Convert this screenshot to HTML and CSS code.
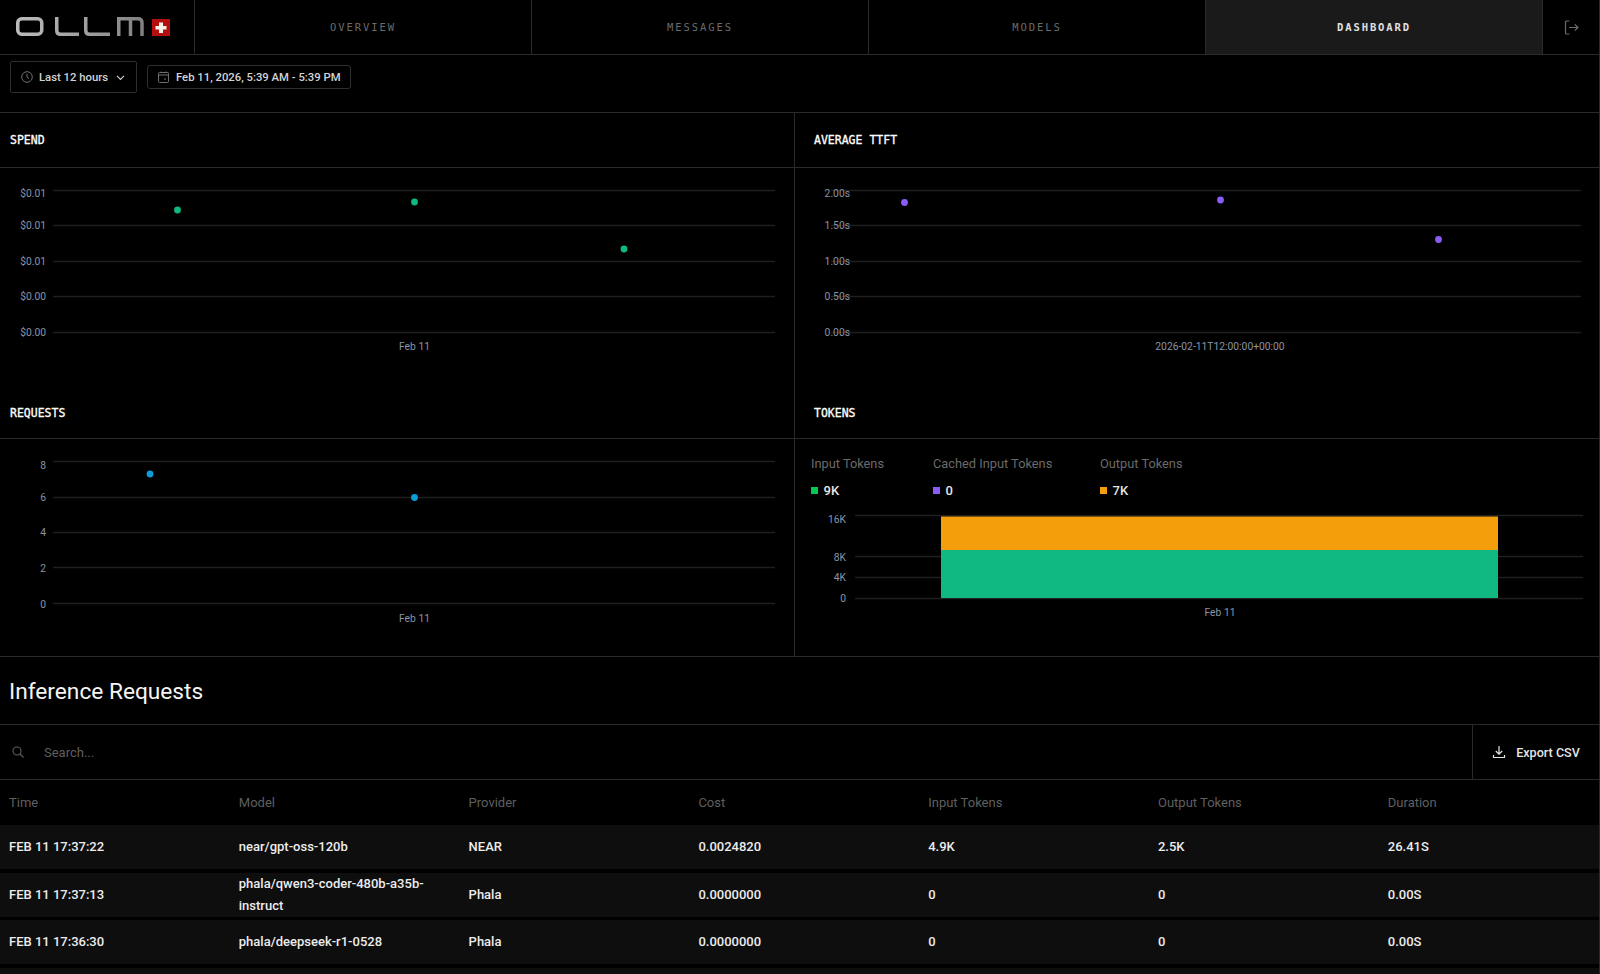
FILE: index.html
```html
<!DOCTYPE html>
<html lang="en">
<head>
<meta charset="utf-8">
<title>OLLM Dashboard</title>
<link rel="stylesheet" href="styles.css">
</head>
<body>
<header class="nav">
  <div class="logo">
    <svg width="160" height="24" viewBox="0 0 160 24" class="logo-mark">
      <defs><linearGradient id="lg" gradientUnits="userSpaceOnUse" x1="0" x2="130" y1="0" y2="0"><stop offset="0" stop-color="#bcbcbc"/><stop offset="0.6" stop-color="#9c9c9c"/><stop offset="1" stop-color="#808080"/></linearGradient></defs>
      <g fill="none" stroke="url(#lg)" stroke-width="3.500">
        <rect x="2.750" y="3.750" width="24" height="15.500" rx="4"/>
        <path d="M41.750 2V15.500Q41.750 19.250 45.500 19.250H64"/>
        <path d="M70.750 2V15.500Q70.750 19.250 74.500 19.250H95"/>
        <path d="M103.750 21V3.750H123Q127 3.750 127 7.750V21M115.500 3.750V21"/>
      </g>
      <rect x="137" y="4" width="18" height="17" fill="#b30f0f"/>
      <path d="M144 7.500h4v3.500h3.500v3.500h-3.500v3.500h-4v-3.500h-3.500v-3.500h3.500z" fill="#f3f3e6"/>
    </svg>
  </div>
  <a class="tab">OVERVIEW</a>
  <a class="tab">MESSAGES</a>
  <a class="tab">MODELS</a>
  <a class="tab active">DASHBOARD</a>
  <div class="logout">
    <svg width="15" height="15" viewBox="0 0 15 15" fill="none" stroke="#6b6b6b" stroke-width="1.200"><path d="M5.500 1H2.500a1 1 0 0 0-1 1v11a1 1 0 0 0 1 1H5.500M5 7.500H14M10.800 4.300L14 7.500L10.800 10.700"/></svg>
  </div>
</header>

<div class="toolbar">
  <button class="pick">
    <svg class="ico" width="12" height="12" viewBox="0 0 12 12" fill="none" stroke="#6f6f6f"><circle cx="6" cy="6" r="5.300"/><path d="M6 2.800V6.200L8 7.500"/></svg>
    <span>Last 12 hours</span>
    <svg class="ico chev" width="9" height="9" viewBox="0 0 9 9" fill="none" stroke="#cfcfcf" stroke-width="1.200"><path d="M1 2.800L4.500 6.300L8 2.800"/></svg>
  </button>
  <button class="pick date">
    <svg class="ico" width="11" height="12" viewBox="0 0 11 12" fill="none" stroke="#6f6f6f"><rect x=".5" y="1.500" width="10" height="10" rx="1"/><path d="M.5 4H10.500M3 .5V2M8 .5V2M6 8H8"/></svg>
    <span>Feb 11, 2026, 5:39 AM - 5:39 PM</span>
  </button>
</div>

<section class="charts">
  <div class="panel">
    <h3 class="ptitle">SPEND</h3>
    <svg class="plot" width="794" height="216" viewBox="0 0 794 216">
      <g class="grid"><path d="M53 22.500H775"/><path d="M53 57.500H775"/><path d="M53 93.500H775"/><path d="M53 128.500H775"/><path d="M53 164.500H775"/></g>
      <g class="ylab"><text x="46" y="29">$0.01</text><text x="46" y="61">$0.01</text><text x="46" y="97">$0.01</text><text x="46" y="132">$0.00</text><text x="46" y="168">$0.00</text></g>
      <text class="xlab" x="414.500" y="182">Feb 11</text>
      <g fill="#10b981"><circle cx="177.500" cy="42" r="3.400"/><circle cx="414.500" cy="34" r="3.400"/><circle cx="624" cy="81" r="3.400"/></g>
    </svg>
  </div>
  <div class="panel">
    <h3 class="ptitle inset">AVERAGE TTFT</h3>
    <svg class="plot" width="805" height="216" viewBox="0 0 805 216">
      <g class="grid"><path d="M36 22.500H786"/><path d="M36 57.500H786"/><path d="M36 93.500H786"/><path d="M36 128.500H786"/><path d="M36 164.500H786"/></g>
      <g class="ylab"><text x="55" y="29">2.00s</text><text x="55" y="61">1.50s</text><text x="55" y="97">1.00s</text><text x="55" y="132">0.50s</text><text x="55" y="168">0.00s</text></g>
      <text class="xlab" x="425" y="182">2026-02-11T12:00:00+00:00</text>
      <g fill="#8b5cf6"><circle cx="109.500" cy="34.500" r="3.400"/><circle cx="425.500" cy="32" r="3.400"/><circle cx="643.500" cy="71.500" r="3.400"/></g>
    </svg>
  </div>
  <div class="panel">
    <h3 class="ptitle lower">REQUESTS</h3>
    <svg class="plot" width="794" height="217" viewBox="0 0 794 217">
      <g class="grid"><path d="M53 22.500H775"/><path d="M53 58.500H775"/><path d="M53 93.500H775"/><path d="M53 128.500H775"/><path d="M53 164.500H775"/></g>
      <g class="ylab"><text x="46" y="30">8</text><text x="46" y="62">6</text><text x="46" y="97">4</text><text x="46" y="133">2</text><text x="46" y="169">0</text></g>
      <text class="xlab" x="414.500" y="183">Feb 11</text>
      <g fill="#0f9bd7"><circle cx="150" cy="35" r="3.400"/><circle cx="414.500" cy="58.500" r="3.400"/></g>
    </svg>
  </div>
  <div class="panel">
    <h3 class="ptitle inset lower">TOKENS</h3>
    <div class="tokens">
      <div class="legend">
        <div class="lg lg1"><span class="lg-name">Input Tokens</span><span class="lg-val"><i class="sw green"></i>9K</span></div>
        <div class="lg lg2"><span class="lg-name">Cached Input Tokens</span><span class="lg-val"><i class="sw violet"></i>0</span></div>
        <div class="lg"><span class="lg-name">Output Tokens</span><span class="lg-val"><i class="sw amber"></i>7K</span></div>
      </div>
      <svg class="plot" width="805" height="127" viewBox="0 0 805 127">
        <g class="grid"><path d="M60 2.500H788"/><path d="M60 43.500H788"/><path d="M60 64.500H788"/><path d="M60 85.500H788"/></g>
        <g class="ylab"><text x="51" y="10">16K</text><text x="51" y="48">8K</text><text x="51" y="68">4K</text><text x="51" y="89">0</text></g>
        <rect x="146" y="3.500" width="557" height="33.500" fill="#f59e0b"/>
        <rect x="146" y="37" width="557" height="48" fill="#10b981"/>
        <text class="xlab" x="425" y="103">Feb 11</text>
      </svg>
    </div>
  </div>
</section>

<section class="requests">
  <h2 class="rtitle">Inference Requests</h2>
  <div class="searchbar">
    <div class="search">
      <svg width="12" height="12" viewBox="0 0 12 12" fill="none" stroke="#5f5f5f" stroke-width="1.100"><circle cx="5" cy="5" r="4"/><path d="M8 8L11.500 11.500"/></svg>
      <span class="ph">Search...</span>
    </div>
    <button class="export">
      <svg width="14" height="14" viewBox="0 0 14 14" fill="none" stroke="#e5e5e5" stroke-width="1.200"><path d="M7 1V9M3.800 6L7 9.200L10.200 6M1.500 10V12.500H12.500V10"/></svg>
      <span>Export CSV</span>
    </button>
  </div>
  <div class="thead row">
    <span>Time</span><span>Model</span><span>Provider</span><span>Cost</span><span>Input Tokens</span><span>Output Tokens</span><span>Duration</span>
  </div>
  <div class="row item"><span>FEB 11 17:37:22</span><span>near/gpt-oss-120b</span><span>NEAR</span><span>0.0024820</span><span>4.9K</span><span>2.5K</span><span>26.41S</span></div>
  <div class="row item"><span>FEB 11 17:37:13</span><span class="wrap">phala/qwen3-coder-480b-a35b-instruct</span><span>Phala</span><span>0.0000000</span><span>0</span><span>0</span><span>0.00S</span></div>
  <div class="row item"><span>FEB 11 17:36:30</span><span>phala/deepseek-r1-0528</span><span>Phala</span><span>0.0000000</span><span>0</span><span>0</span><span>0.00S</span></div>
  <div class="row item"></div>
</section>
</body>
</html>
```
FILE: styles.css
```css
* { box-sizing: border-box; }
html, body { margin: 0; padding: 0; background: #000; height: 974px; overflow: hidden; }
body { font-family: "Roboto", "Noto Sans", sans-serif; color: #e5e5e5; border-right: 1px solid #2a2a2a; width: 1600px; }
h2, h3 { margin: 0; font-weight: 400; }
button { font-family: inherit; background: none; color: inherit; cursor: pointer; }

.nav { display: grid; grid-template-columns: 194px 337px 337px 337px 337px 1fr; height: 55px; border-bottom: 1px solid #2a2a2a; }
.logo { display: flex; align-items: center; padding-left: 15px; }
.logo-mark { display: block; }
.tab { display: flex; align-items: center; justify-content: center; border-left: 1px solid #2a2a2a; font-family: "DejaVu Sans Mono", monospace; font-size: 10.500px; letter-spacing: 1.900px; color: #6b6b6b; }
.tab.active { background: #1a1a1a; color: #e0e0e0; font-weight: 700; }
.logout { display: flex; align-items: center; justify-content: center; border-left: 1px solid #2a2a2a; }

.toolbar { display: flex; align-items: center; gap: 10px; height: 58px; padding-left: 10px; padding-bottom: 13px; border-bottom: 1px solid #2a2a2a; }
.pick { display: flex; align-items: center; height: 32px; width: 127px; padding: 0 10px; gap: 6px; border: 1px solid #2e2e2e; border-radius: 2px; font-size: 11.300px; font-weight: 500; color: #d4d4d4; white-space: nowrap; flex: none; }
.pick.date { height: 24px; width: 204px; border-radius: 3px; gap: 7px; }
.ico { flex: none; display: block; }
.chev { margin-left: 2px; }

.charts { display: grid; grid-template-columns: 794px 1fr; grid-template-rows: 271px 272px; height: 544px; border-bottom: 1px solid #2a2a2a; }
.panel { min-width: 0; overflow: hidden; }
.panel:nth-child(even) { border-left: 1px solid #2a2a2a; }
.ptitle { height: 55px; display: flex; align-items: center; padding: 0 0 0 10px; font-family: "DejaVu Sans Mono", monospace; font-size: 11.500px; font-weight: 400; -webkit-text-stroke: 0.3px #fff; color: #fff; border-bottom: 1px solid #2a2a2a; }
.ptitle.inset { padding-left: 19px; }
.ptitle.lower { padding-top: 3px; }
.plot { display: block; }
.grid path { stroke: #1f1f1f; stroke-width: 1.500; fill: none; }
.ylab text { font-size: 10.300px; fill: #8a94a6; text-anchor: end; font-family: "Roboto", sans-serif; }
.xlab { font-size: 10.300px; fill: #8a94a6; text-anchor: middle; font-family: "Roboto", sans-serif; }

.tokens { display: flex; flex-direction: column; }
.legend { display: flex; padding: 17px 0 0 16px; height: 74px; }
.lg { display: flex; flex-direction: column; gap: 12px; font-size: 12.800px; }
.lg1 { width: 122px; }
.lg2 { width: 167px; }
.lg-name { color: #6a6a6a; }
.lg-val { display: flex; align-items: center; gap: 6px; color: #e5e5e5; font-weight: 500; font-size: 13px; }
.sw { display: block; width: 6.500px; height: 6.500px; }
.green { background: #00c853; }
.violet { background: #8b5cf6; }
.amber { background: #f59e0b; }

.rtitle { height: 68px; display: flex; align-items: center; padding: 1px 0 0 9px; font-size: 22.700px; color: #f5f5f5; border-bottom: 1px solid #2a2a2a; }
.searchbar { display: flex; height: 55px; border-bottom: 1px solid #2a2a2a; }
.search { flex: 1; display: flex; align-items: center; padding-left: 12px; gap: 20px; font-size: 13px; color: #5f5f5f; }
.export { width: 127px; display: flex; align-items: center; justify-content: center; gap: 10px; border: 0; border-left: 1px solid #2a2a2a; font-size: 12.600px; font-weight: 500; color: #e5e5e5; }

.row { display: grid; grid-template-columns: repeat(7, 229.800px) 1fr; align-items: center; padding-left: 9px; font-size: 13px; }
.row span { padding-right: 16px; }
.thead { height: 45px; color: #5f5f5f; }
.item { height: 44px; background: #0e0e0e; margin-bottom: 3.500px; font-weight: 500; color: #ececec; padding-bottom: 1px; }
.wrap { line-height: 22px; }
```
